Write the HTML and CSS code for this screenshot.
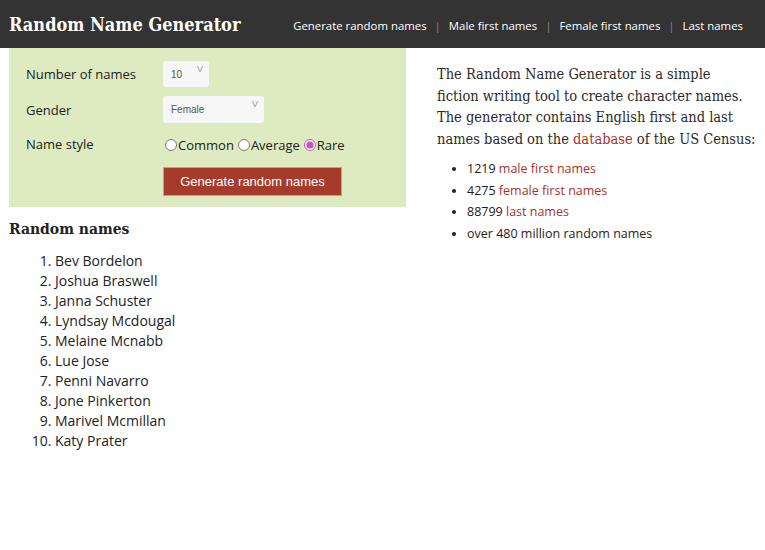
FILE: index.html
```html
<!DOCTYPE html>
<html lang="en">
  <head>
    <meta charset="UTF-8" />
    <title>Random Name Generator</title>
    <link rel="stylesheet" href="styles.css">
  </head>
  <body>
    <header class="topbar">
      <div class="brand">Random Name Generator</div>
      <nav class="nav">
        <a href="#">Generate random names</a>
        <span class="sep">|</span>
        <a href="#">Male first names</a>
        <span class="sep">|</span>
        <a href="#">Female first names</a>
        <span class="sep">|</span>
        <a href="#">Last names</a>
      </nav>
    </header>

    <div class="main">
      <div class="left">
        <form class="panel">
          <label class="lbl">Number of names</label>
          <div class="select small">
            <select>
              <option>10</option>
            </select>
          </div>

          <label class="lbl">Gender</label>
          <div class="select wide">
            <select>
              <option>Female</option>
            </select>
          </div>

          <label class="lbl">Name style</label>
          <div class="radios">
            <label><input type="radio" name="style">Common</label>
            <label><input type="radio" name="style">Average</label>
            <label><input type="radio" name="style" checked>Rare</label>
          </div>

          <span></span>
          <div>
            <button type="button" class="go">Generate random names</button>
          </div>
        </form>

        <h2 class="results-title">Random names</h2>
        <ol class="names">
          <li>Bev Bordelon</li>
          <li>Joshua Braswell</li>
          <li>Janna Schuster</li>
          <li>Lyndsay Mcdougal</li>
          <li>Melaine Mcnabb</li>
          <li>Lue Jose</li>
          <li>Penni Navarro</li>
          <li>Jone Pinkerton</li>
          <li>Marivel Mcmillan</li>
          <li>Katy Prater</li>
        </ol>
      </div>

      <div class="right">
        <p class="intro">
          The Random Name Generator is a simple fiction writing tool to create
          character names. The generator contains English first and last names
          based on the <a href="#">database</a> of the US Census:
        </p>
        <ul class="stats">
          <li>1219 <a href="#">male first names</a></li>
          <li>4275 <a href="#">female first names</a></li>
          <li>88799 <a href="#">last names</a></li>
          <li>over 480 million random names</li>
        </ul>
      </div>
    </div>
  </body>
</html>
```

FILE: styles.css
```css
body {
  margin: 0;
  font-family: "Open Sans", sans-serif;
  color: #222;
  background: #fff;
}
a {
  color: #a8321f;
  text-decoration: none;
}

.topbar {
  display: flex;
  align-items: center;
  justify-content: space-between;
  height: 48px;
  padding: 0 22px 0 9px;
  background: #333;
  white-space: nowrap;
}
.brand {
  font-family: "DejaVu Serif Condensed", "DejaVu Serif", serif;
  font-weight: bold;
  font-size: 18px;
  color: #fff;
}
.nav {
  display: flex;
  align-items: center;
  gap: 8px;
  padding-top: 2px;
  font-size: 11.4px;
}
.nav a {
  color: #fff;
}
.nav .sep {
  color: #888;
}

.main {
  display: grid;
  grid-template-columns: 397px 1fr;
  gap: 31px;
  padding: 0 9px;
}

.panel {
  display: grid;
  grid-template-columns: 137px 1fr;
  align-items: center;
  row-gap: 9px;
  padding: 13px 0 11px 17px;
  background: #deeabf;
  font-size: 13px;
}
.select {
  position: relative;
  height: 26px;
  background: #f7f7f7;
  border-radius: 3px;
}
.select.small {
  width: 46px;
}
.select.wide {
  width: 101px;
  height: 27px;
}
.select select {
  appearance: none;
  width: 100%;
  height: 100%;
  border: 0;
  padding: 0 8px;
  background: transparent;
  font-family: "Liberation Sans", sans-serif;
  font-size: 10px;
  color: #555;
}
.select::after {
  content: "V";
  position: absolute;
  right: 6px;
  top: 3px;
  font-family: "Liberation Sans", sans-serif;
  font-size: 9px;
  color: #999;
}
.radios {
  display: flex;
  align-items: center;
  gap: 2px;
  padding: 4px 0 2px;
}
.radios label {
  display: flex;
  align-items: center;
}
.radios input {
  width: 12px;
  height: 12px;
  margin: 0 1px 0 2px;
  accent-color: #bf56b8;
}
.go {
  width: 179px;
  height: 29px;
  margin-top: 2px;
  border: 1px solid #c99b82;
  background: #a63b2b;
  color: #fff;
  font-family: "Liberation Sans", sans-serif;
  font-size: 13px;
  cursor: pointer;
}

.results-title {
  margin: 12px 0 13px;
  font-family: "DejaVu Serif Condensed", "DejaVu Serif", serif;
  font-size: 15.5px;
  font-weight: bold;
}
.names {
  margin: 0;
  padding-left: 46px;
  font-size: 14px;
  line-height: 20px;
}

.intro {
  margin: 16px 0 8px;
  font-family: "DejaVu Serif Condensed", "DejaVu Serif", serif;
  font-size: 14.5px;
  line-height: 21.5px;
  color: #2a2a2a;
}
.stats {
  margin: 0;
  padding-left: 30px;
  font-size: 12.5px;
  line-height: 21.5px;
}
```
